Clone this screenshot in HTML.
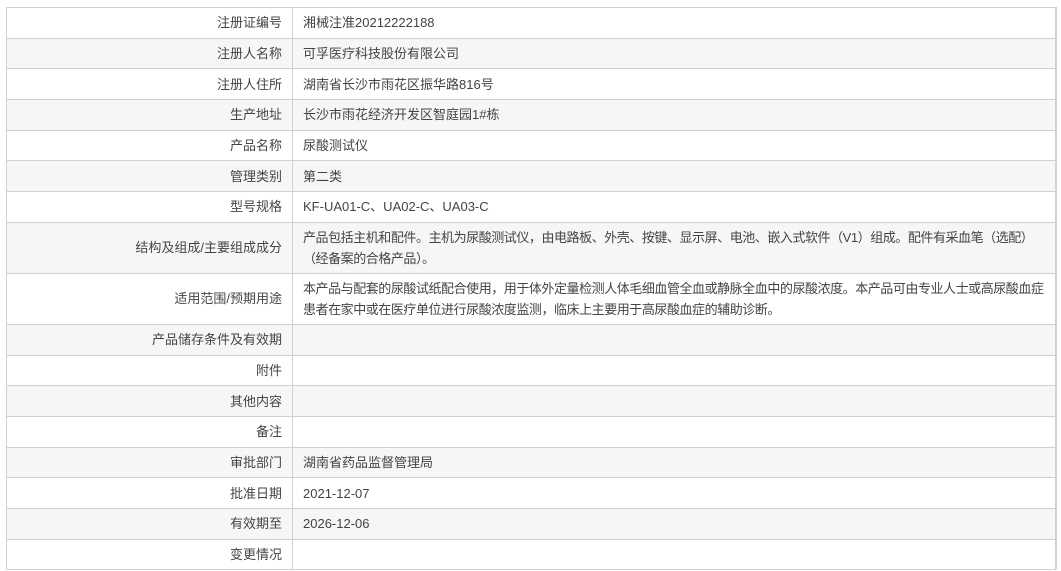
<!DOCTYPE html>
<html><head><meta charset="utf-8"><style>
html,body{margin:0;padding:0;background:#fff;}
table{position:absolute;left:6px;top:7px;width:1050px;border-collapse:collapse;table-layout:fixed;font-family:"Liberation Sans","Noto Sans CJK SC",sans-serif;font-size:13px;color:#444;}
td{border:1px solid #d0d0d0;padding:0 10px;height:29.7px;line-height:21px;white-space:nowrap;vertical-align:middle;}
td.l{text-align:right;}
td.w{letter-spacing:-0.45px;}
tr:nth-child(even) td{background:#f6f6f6;}
tr.d td{height:50px;}
.rb{position:absolute;left:1056px;top:7px;width:1px;height:562px;background:#d0d0d0;}
</style></head><body>
<table>
<colgroup><col style="width:286px"><col></colgroup>
<tr><td class="l">注册证编号</td><td>湘械注准20212222188</td></tr>
<tr><td class="l">注册人名称</td><td>可孚医疗科技股份有限公司</td></tr>
<tr><td class="l">注册人住所</td><td>湖南省长沙市雨花区振华路816号</td></tr>
<tr><td class="l">生产地址</td><td>长沙市雨花经济开发区智庭园1#栋</td></tr>
<tr><td class="l">产品名称</td><td>尿酸测试仪</td></tr>
<tr><td class="l">管理类别</td><td>第二类</td></tr>
<tr><td class="l">型号规格</td><td>KF-UA01-C、UA02-C、UA03-C</td></tr>
<tr class="d"><td class="l">结构及组成/主要组成成分</td><td class="w">产品包括主机和配件。主机为尿酸测试仪，由电路板、外壳、按键、显示屏、电池、嵌入式软件（V1）组成。配件有采血笔（选配）<br>（经备案的合格产品）。</td></tr>
<tr class="d"><td class="l">适用范围/预期用途</td><td class="w">本产品与配套的尿酸试纸配合使用，用于体外定量检测人体毛细血管全血或静脉全血中的尿酸浓度。本产品可由专业人士或高尿酸血症<br>患者在家中或在医疗单位进行尿酸浓度监测，临床上主要用于高尿酸血症的辅助诊断。</td></tr>
<tr><td class="l">产品储存条件及有效期</td><td></td></tr>
<tr><td class="l">附件</td><td></td></tr>
<tr><td class="l">其他内容</td><td></td></tr>
<tr><td class="l">备注</td><td></td></tr>
<tr><td class="l">审批部门</td><td>湖南省药品监督管理局</td></tr>
<tr><td class="l">批准日期</td><td>2021-12-07</td></tr>
<tr><td class="l">有效期至</td><td>2026-12-06</td></tr>
<tr><td class="l">变更情况</td><td></td></tr>
</table>
<div class="rb"></div>
</body></html>
